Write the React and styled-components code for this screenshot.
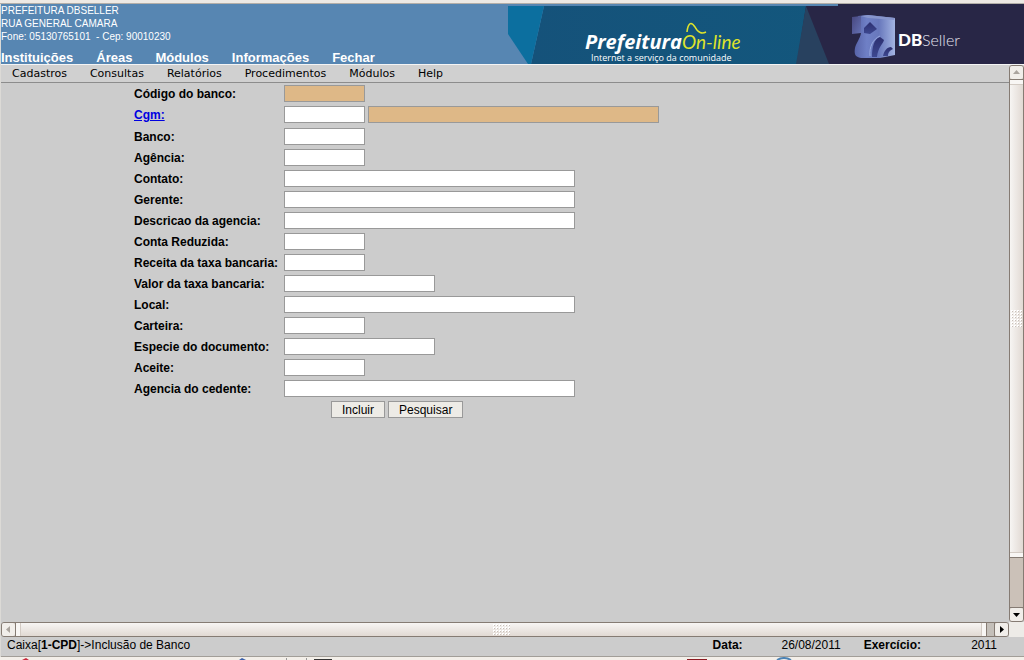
import React from "react";
import styled, { createGlobalStyle, css } from "styled-components";

const GlobalStyle = createGlobalStyle`
  * { box-sizing: border-box; }
  html, body { margin: 0; padding: 0; background: #cccccc; }
  body, button, input { font-family: "Liberation Sans", Arial, Helvetica, sans-serif; }
`;

const Page = styled.div`
  min-height: 100vh;
  display: flex;
  flex-direction: column;
  background: #cccccc;
  color: #000;
  font-size: 12px;
`;

const WindowEdge = styled.div`
  height: 4px;
  flex: none;
  background: #ede9e4;
  border-bottom: 1px solid #b3aea8;
`;

const Frame = styled.div`
  flex: 1;
  display: flex;
  flex-direction: column;
  border-left: 1px solid #dcdad6;
`;

const Header = styled.header`
  height: 60px;
  display: flex;
  justify-content: space-between;
  background: #5786b2;
  color: #fff;
  overflow: hidden;
`;

const HeaderInfo = styled.div`
  display: flex;
  flex-direction: column;
  justify-content: space-between;
  white-space: nowrap;
`;

const Address = styled.address`
  font-style: normal;
  font-size: 10px;
  line-height: 13px;
  white-space: pre;
`;

const HeaderNav = styled.nav`
  display: flex;
  gap: 23px;
  font-size: 13px;
  line-height: 13px;
  font-weight: bold;

  a { color: #fff; text-decoration: none; }
`;

const Banner = styled.svg`
  flex: none;
  display: block;
`;

const Workspace = styled.div`
  flex: 1;
  display: grid;
  grid-template-columns: 1fr 15px;
  grid-template-rows: 1fr 15px;
  border-top: 1px solid #f4f4f4;
`;

const Content = styled.div`
  display: flex;
  flex-direction: column;
  min-width: 0;
`;

const MenuBar = styled.nav`
  height: 18px;
  display: flex;
  align-items: center;
  gap: 23px;
  padding-left: 11px;
  background: #d0d0d0;
  border-bottom: 1px solid #8c8c8c;

  a {
    font: 11px/17px "DejaVu Sans", Verdana, sans-serif;
    color: #000;
    text-decoration: none;
  }
`;

const Form = styled.form`
  width: 550px;
  max-width: 100%;
  margin: 2px 0 0 133px;
  display: flex;
  flex-direction: column;
  gap: 4px;
`;

const Row = styled.div`
  display: grid;
  grid-template-columns: 147px auto auto;
  justify-content: start;
  column-gap: 3px;
  align-items: center;
  margin-bottom: ${(p) => (p.$spaced ? "1px" : "0")};
`;

const labelText = css`
  padding-top: 2px;
  font-size: 12px;
  line-height: 15px;
  font-weight: bold;
  white-space: nowrap;
`;

const Label = styled.label`
  ${labelText}
`;

const LabelLink = styled.a`
  ${labelText}
  color: #0000e0;
`;

const widths = { short: "81px", medium: "151px", long: "291px" };

const Field = styled.input`
  width: ${(p) => widths[p.$size]};
  height: 17px;
  padding: 0 3px;
  border: 1px solid #999;
  border-radius: 0;
  background: ${(p) => (p.readOnly ? "#deb887" : "#fff")};
  font-size: 12px;
  outline: none;
`;

const Actions = styled.div`
  display: flex;
  gap: 3px;
  padding-left: 197px;
`;

const Button = styled.button`
  height: 17px;
  padding: 0 10px;
  border: 1px solid #999;
  border-radius: 0;
  background: #edebe6;
  color: #000;
  font-size: 12px;
  line-height: 17px;
`;

const ScrollBar = styled.div`
  display: flex;
  flex-direction: ${(p) => (p.$vertical ? "column" : "row")};
  background: ${(p) => (p.$vertical ? "#cbc1b8" : "#c4bfb9")};
  border: 1px solid #857b73;
  border-radius: 3px;
`;

const ScrollButton = styled.button`
  flex: 0 0 13px;
  display: flex;
  align-items: center;
  justify-content: center;
  padding: 0;
  border: 0;
  background: #f1eeea;
  border-radius: 2px;
`;

const Thumb = styled.div`
  flex: ${(p) => p.$share};
  display: flex;
  flex-direction: ${(p) => (p.$vertical ? "column" : "row")};
  justify-content: space-between;
  align-items: center;
  background: linear-gradient(${(p) => (p.$vertical ? "to right" : "to bottom")}, #f7f5f3, #e1d9d3);
  border: 0 solid #857b73;
  border-width: ${(p) => (p.$vertical ? "1px 0" : "0 1px")};
`;

const Cap = styled.span`
  ${(p) => (p.$vertical ? "height: 5px; width: 100%;" : "width: 5px; height: 100%;")}
  background: #f8f6f4;
  border: 0 solid #d3cbc4;
  border-width: ${(p) =>
    p.$vertical ? (p.$end ? "1px 0 0" : "0 0 1px") : p.$end ? "0 0 0 1px" : "0 1px 0 0"};
`;

const Trough = styled.div`
  flex: ${(p) => p.$share};
  border: 0 solid #857b73;
  border-width: ${(p) => (p.$vertical ? "0 0 1px" : "0 1px 0 0")};
`;

const Corner = styled.div`
  background: #edebe7;
`;

const StatusBar = styled.footer`
  height: 20px;
  display: flex;
  align-items: center;
  padding: 0 27px 2px 6px;
  border-bottom: 1px solid #a29e98;
  line-height: 17px;
`;

const StatusPath = styled.span`
  flex: 1;
`;

const StatusLabel = styled.strong`
  flex: none;
`;

const StatusValue = styled.span`
  flex: none;
  width: ${(p) => p.$width};
  margin-right: ${(p) => p.$after || "0"};
  text-align: right;
`;

const TaskStrip = styled.svg`
  display: block;
  flex: none;
  width: 100%;
  height: 3px;
  background: #f3efe9;
`;

const arrows = {
  up: "M0 5 L3.5 1 L7 5 Z",
  down: "M0 2 L7 2 L3.5 6 Z",
  left: "M5 0 L1 3.5 L5 7 Z",
  right: "M2 0 L6 3.5 L2 7 Z",
};

function Arrow({ dir, muted }) {
  return (
    <svg width="7" height="7" viewBox="0 0 7 7" aria-hidden="true">
      <path d={arrows[dir]} fill={muted ? "#aaa49e" : "#000"} />
    </svg>
  );
}

function Grip({ vertical }) {
  const cols = vertical ? 4 : 6;
  const rows = vertical ? 6 : 4;
  const dots = [];
  for (let x = 0; x < cols; x++) {
    for (let y = 0; y < rows; y++) {
      dots.push(
        <g key={`${x}-${y}`}>
          <rect x={x * 3} y={y * 3} width="2" height="2" fill="#fff" />
          <rect x={x * 3 + 1} y={y * 3 + 1} width="1" height="1" fill="#c9c0b9" />
        </g>
      );
    }
  }
  return (
    <svg width={cols * 3 - 1} height={rows * 3 - 1} aria-hidden="true">
      {dots}
    </svg>
  );
}

function Scroll({ vertical, thumb, rest }) {
  return (
    <ScrollBar $vertical={vertical}>
      <ScrollButton type="button" aria-label={vertical ? "Acima" : "Esquerda"}>
        <Arrow dir={vertical ? "up" : "left"} muted />
      </ScrollButton>
      <Thumb $vertical={vertical} $share={thumb}>
        <Cap $vertical={vertical} />
        <Grip vertical={vertical} />
        <Cap $vertical={vertical} $end />
      </Thumb>
      <Trough $vertical={vertical} $share={rest} />
      <ScrollButton type="button" aria-label={vertical ? "Abaixo" : "Direita"}>
        <Arrow dir={vertical ? "down" : "right"} />
      </ScrollButton>
    </ScrollBar>
  );
}

function BrandBanner() {
  return (
    <Banner width="516" height="60" viewBox="0 0 516 60" role="img" aria-label="Prefeitura On-line DBSeller">
      <defs>
        <linearGradient id="teal" x1="0" x2="1">
          <stop offset="0" stopColor="#15527a" />
          <stop offset="1" stopColor="#13577d" />
        </linearGradient>
        <linearGradient id="cube" x1="0" y1="0" x2="1" y2="0">
          <stop offset="0" stopColor="#5763a8" />
          <stop offset="0.3" stopColor="#6f80c6" />
          <stop offset="0.6" stopColor="#6878bc" />
          <stop offset="1" stopColor="#a3b4e2" />
        </linearGradient>
        <linearGradient id="block" x1="0" y1="0" x2="1" y2="1">
          <stop offset="0" stopColor="#47477f" />
          <stop offset="1" stopColor="#6470b2" />
        </linearGradient>
        <linearGradient id="arch" x1="0" y1="0" x2="0" y2="1">
          <stop offset="0" stopColor="#2c2f70" />
          <stop offset="1" stopColor="#3d4890" />
        </linearGradient>
      </defs>
      <path d="M36 2 H330 V60 H23 Z" fill="url(#teal)" />
      <path d="M0 2 H36 L23 60 H20 L0 30 Z" fill="#0c6f9f" />
      <path d="M298 2 H330 V0 H516 V60 H289 Z" fill="#282646" />
      <path d="M298 2 L321 60 H288 Z" fill="#28415f" />

      <text x="77" y="45" fontFamily="'Open Sans', sans-serif" fontSize="20" fontWeight="700" fontStyle="italic" fill="#fff">Prefeitura</text>
      <text x="174" y="45" fontFamily="Lato, sans-serif" fontSize="19" fontStyle="italic" fill="#dfe32b">On-line</text>
      <path d="M179 28 C180 19 183 17 187 23 C190 29 194 30 198 28" fill="none" stroke="#dfe32b" strokeWidth="1.6" />
      <text x="83" y="57" fontFamily="'Open Sans', sans-serif" fontSize="9" fill="#fff">Internet a serviço da comunidade</text>

      <path d="M350 12 L360 11 L387 14 V51 L372 54 L353 54 C347 53 346 50 347 44 C348 39 352 35 353 29 Z" fill="url(#cube)" />
      <path d="M344 13 L353 12 V29 L344 30 Z" fill="url(#block)" />
      <path d="M353 12 L360 11 L387 14 L386 16 L360 14 Z" fill="#8795cc" />
      <path d="M356 24 L362 18 L369 25 L362 30 L356 29 Z" fill="url(#arch)" />
      <path d="M364 53 C364 43 366 35 372 33 L376 36 C375 40 370 43 369 53 Z" fill="url(#arch)" />
      <path d="M362 52 C361 43 365 35 372 32" fill="none" stroke="#9aaae0" strokeWidth="1" />
      <path d="M375 52 C376 47 379 43 383 43 L385 45 C381 47 380 49 380 52 Z" fill="url(#arch)" />

      <text x="390" y="42" fontFamily="Lato, sans-serif" fontSize="17" fontWeight="900" fill="#fff">DB</text>
      <text x="414" y="42" fontFamily="Lato, sans-serif" fontSize="16" fontWeight="300" fill="#e4e4ee">Seller</text>
    </Banner>
  );
}

const headerLinks = ["Instituições", "Áreas", "Módulos", "Informações", "Fechar"];
const menuLinks = ["Cadastros", "Consultas", "Relatórios", "Procedimentos", "Módulos", "Help"];
const fields = [
  ["banco", "Banco:", "short"],
  ["agencia", "Agência:", "short"],
  ["contato", "Contato:", "long"],
  ["gerente", "Gerente:", "long"],
  ["descricao", "Descricao da agencia:", "long"],
  ["conta", "Conta Reduzida:", "short"],
  ["receita", "Receita da taxa bancaria:", "short"],
  ["valor", "Valor da taxa bancaria:", "medium"],
  ["local", "Local:", "long"],
  ["carteira", "Carteira:", "short"],
  ["especie", "Especie do documento:", "medium"],
  ["aceite", "Aceite:", "short"],
  ["cedente", "Agencia do cedente:", "long"],
];

export default function App() {
  return (
    <Page>
      <GlobalStyle />
      <WindowEdge />
      <Frame>
        <Header>
          <HeaderInfo>
            <Address>{"PREFEITURA DBSELLER\nRUA GENERAL CAMARA\nFone: 05130765101  - Cep: 90010230"}</Address>
            <HeaderNav>
              {headerLinks.map((t) => <a key={t} href="#">{t}</a>)}
            </HeaderNav>
          </HeaderInfo>
          <BrandBanner />
        </Header>
        <Workspace>
          <Content>
            <MenuBar>
              {menuLinks.map((t) => <a key={t} href="#">{t}</a>)}
            </MenuBar>
            <Form onSubmit={(e) => e.preventDefault()}>
              <Row>
                <Label htmlFor="codigo">Código do banco:</Label>
                <Field id="codigo" $size="short" readOnly />
              </Row>
              <Row $spaced>
                <LabelLink id="cgm-label" href="#">Cgm:</LabelLink>
                <Field aria-labelledby="cgm-label" $size="short" />
                <Field aria-label="Nome" $size="long" readOnly />
              </Row>
              {fields.map(([id, text, size]) => (
                <Row key={id}>
                  <Label htmlFor={id}>{text}</Label>
                  <Field id={id} $size={size} />
                </Row>
              ))}
              <Actions>
                <Button type="submit">Incluir</Button>
                <Button type="button">Pesquisar</Button>
              </Actions>
            </Form>
          </Content>
          <Scroll vertical thumb={480} rest={49} />
          <Scroll thumb={972} rest={7} />
          <Corner />
        </Workspace>
        <StatusBar>
          <StatusPath>Caixa[<b>1-CPD</b>]-&gt;Inclusão de Banco</StatusPath>
          <StatusLabel>Data:</StatusLabel>
          <StatusValue $width="98px" $after="23px">26/08/2011</StatusValue>
          <StatusLabel>Exercício:</StatusLabel>
          <StatusValue $width="76px">2011</StatusValue>
        </StatusBar>
      </Frame>
      <TaskStrip aria-hidden="true">
        <path d="M22 3 L26 1 L29 3 Z" fill="#c8283c" />
        <path d="M239 3 L242 1 L246 3 Z" fill="#3a5fa8" />
        <rect x="286" y="1" width="1" height="2" fill="#999" />
        <rect x="306" y="1" width="1" height="2" fill="#999" />
        <rect x="314" y="2" width="18" height="1" fill="#333" />
        <rect x="687" y="2" width="20" height="1" fill="#8c1a22" />
        <path d="M777 3 Q784 -1 791 3" fill="none" stroke="#4b83b5" strokeWidth="2" />
      </TaskStrip>
    </Page>
  );
}
